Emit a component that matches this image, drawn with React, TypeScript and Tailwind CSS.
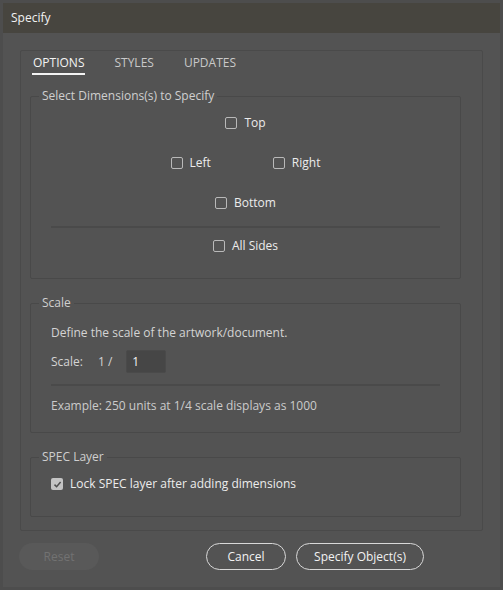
const font = { fontFamily: '"Open Sans", "Liberation Sans", sans-serif' };

const Box = ({ checked = false }: { checked?: boolean }) =>
  checked ? (
    <span className="flex h-[12px] w-[12px] items-center justify-center rounded-[2px] bg-[#c4c4c4]">
      <svg width="9" height="9" viewBox="0 0 9 9">
        <path d="M1.5 4.6 L3.6 6.7 L7.6 2" fill="none" stroke="#4e4e4e" strokeWidth="1.5" />
      </svg>
    </span>
  ) : (
    <span className="block h-[12px] w-[12px] rounded-[2px] border border-[#b9b9b9]" />
  );

const Check = ({ label, checked = false }: { label: string; checked?: boolean }) => (
  <label className="flex h-[16px] items-center gap-[7px] text-[#ececec]">
    <Box checked={checked} />
    <span>{label}</span>
  </label>
);

const Group = ({ title, className, children }: { title: string; className?: string; children: React.ReactNode }) => (
  <fieldset className={`mr-[12px] rounded-[2px] border border-[#494949] ${className ?? ""}`}>
    <legend className="ml-[8px] px-[3px] leading-[16px] text-[#cfcfcf]">{title}</legend>
    {children}
  </fieldset>
);

export default function App() {
  const tabs = ["OPTIONS", "STYLES", "UPDATES"];

  return (
    <div className="h-[590px] w-[503px] bg-[#4d4d4d] p-[3px] text-[12px] leading-[16px]" style={font}>
      <div className="flex h-full flex-col bg-[#535353]">
        <div className="flex h-[30px] shrink-0 items-center bg-[#47453f] px-[8px] text-[#f2f2f2]">Specify</div>

        <div className="px-[17px] pt-[17px]">
          <div className="rounded-[2px] border border-[#4a4a4a] px-[9px] pb-[13px] pt-[4px]">
            <div className="ml-[2px] flex gap-[28px]">
              {tabs.map((t, i) => (
                <div key={t} className="flex flex-col items-center">
                  <span className={`px-[1px] ${i === 0 ? "text-[#f4f4f4]" : "text-[#c9c9c9]"}`}>{t}</span>
                  <span className={`mt-[2px] h-[2px] w-full ${i === 0 ? "bg-[#f4f4f4]" : "bg-transparent"}`} />
                </div>
              ))}
            </div>

            <Group title="Select Dimensions(s) to Specify" className="mt-[13px] pb-[24px]">
              <div className="flex flex-col items-center pt-[11px]">
                <Check label="Top" />
                <div className="mt-[24px] flex gap-[62px]">
                  <Check label="Left" />
                  <Check label="Right" />
                </div>
                <div className="mt-[24px]">
                  <Check label="Bottom" />
                </div>
              </div>
              <div className="mx-[20px] mt-[15px] h-[2px] bg-[#4a4a4a]" />
              <div className="mt-[10px] flex justify-center">
                <Check label="All Sides" />
              </div>
            </Group>

            <Group title="Scale" className="mt-[16px] pb-[18px]">
              <div className="px-[20px]">
                <p className="mt-[14px] text-[#d4d4d4]">Define the scale of the artwork/document.</p>
                <div className="mt-[9px] flex items-center text-[#d4d4d4]">
                  <span>Scale:</span>
                  <span className="ml-[15px]">1 /</span>
                  <input
                    defaultValue="1"
                    className="ml-[14px] h-[23px] w-[40px] rounded-[2px] border border-[#4a4a4a] bg-[#464646] px-[5px] text-[#f4f4f4] outline-none"
                  />
                </div>
                <div className="mt-[11px] h-[2px] bg-[#4a4a4a]" />
                <p className="mt-[12px] text-[#cbcbcb]">Example: 250 units at 1/4 scale displays as 1000</p>
              </div>
            </Group>

            <Group title="SPEC Layer" className="mt-[16px] pb-[24px]">
              <div className="mt-[11px] px-[20px]">
                <Check label="Lock SPEC layer after adding dimensions" checked />
              </div>
            </Group>
          </div>
        </div>

        <div className="mt-[12px] flex items-center pl-[16px] pr-[76px]">
          <button className="h-[27px] w-[80px] rounded-full bg-[#595959] text-[#727272]">Reset</button>
          <div className="ml-auto flex gap-[10px]">
            <button className="h-[27px] w-[80px] rounded-full border border-[#d8d8d8] text-[#f2f2f2]">Cancel</button>
            <button className="h-[27px] w-[128px] rounded-full border border-[#d8d8d8] text-[#f2f2f2]">Specify Object(s)</button>
          </div>
        </div>
      </div>
    </div>
  );
}
